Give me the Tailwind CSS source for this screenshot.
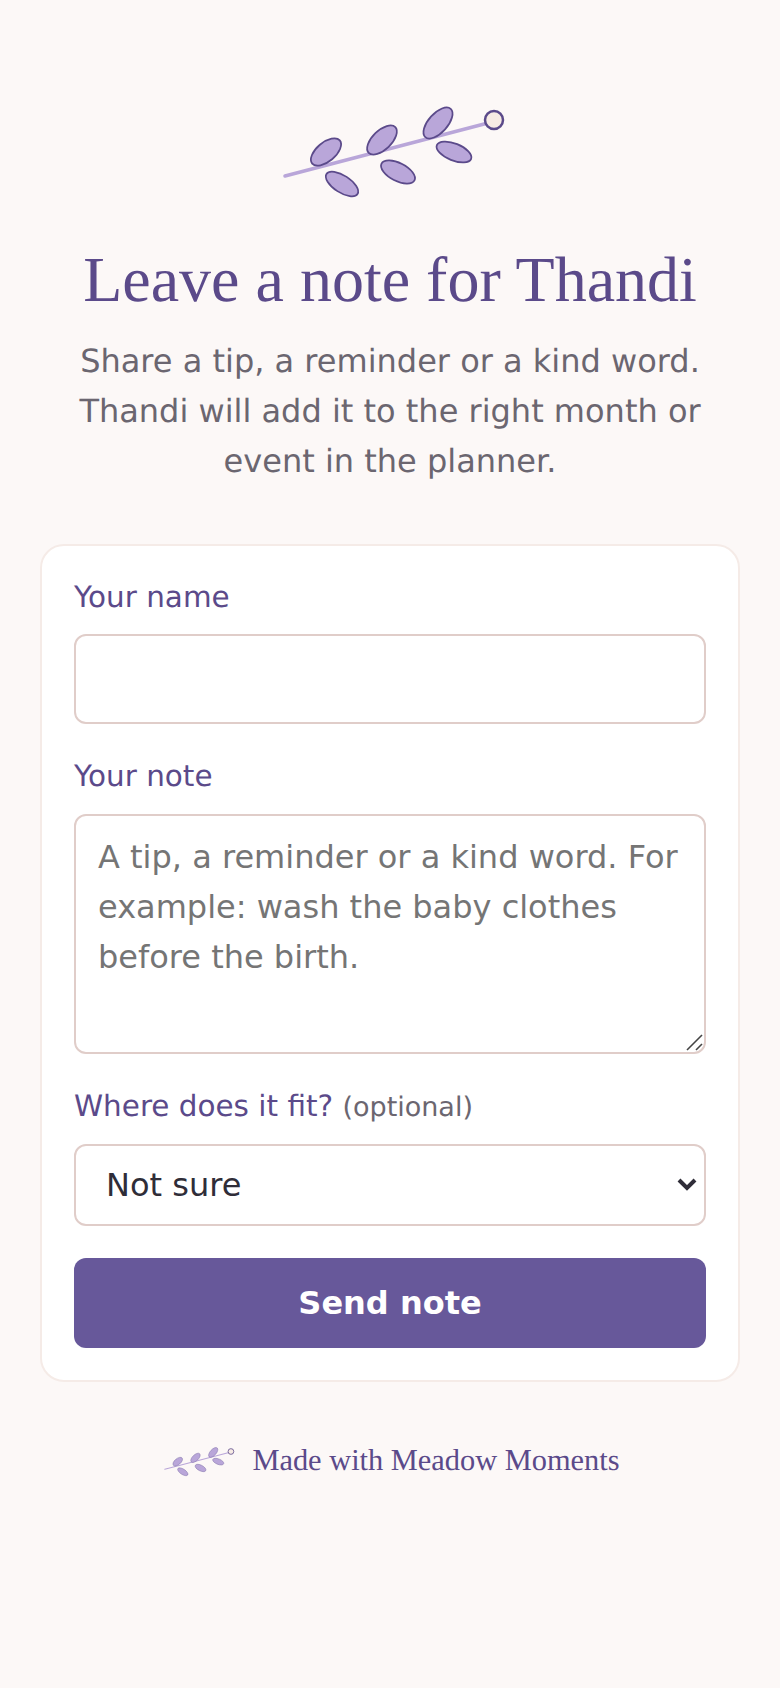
<!doctype html>
<html>

<head>
    <meta charset="UTF-8">
    <meta name="viewport" content="width=device-width, initial-scale=1.0">
    <script src="https://cdn.jsdelivr.net/npm/@tailwindcss/browser@4"></script>
</head>

<body class="bg-[#fcf8f7] font-['DejaVu_Sans',sans-serif] text-[#2f2d38] [text-rendering:geometricPrecision]">
    <main class="h-[1688px] px-[40px] pt-[100px]">
        <header class="flex flex-col items-center text-center">
            <svg class="w-[240px] h-[100px]" viewBox="0 0 240 100" fill="none">
                <line x1="15" y1="76" x2="218" y2="23" stroke="#b9a6d9" stroke-width="3.5" stroke-linecap="round" />
                <g fill="#b9a6d9" stroke="#5b4a8a" stroke-width="1.75">
                    <ellipse cx="56" cy="52" rx="18" ry="9.5" transform="rotate(-40 56 52)" />
                    <ellipse cx="112" cy="40" rx="18.5" ry="9.5" transform="rotate(-44 112 40)" />
                    <ellipse cx="168" cy="23" rx="19" ry="9.5" transform="rotate(-48 168 23)" />
                    <ellipse cx="72" cy="84" rx="18.5" ry="8.5" transform="rotate(33 72 84)" />
                    <ellipse cx="128" cy="72" rx="18.5" ry="9" transform="rotate(27 128 72)" />
                    <ellipse cx="184" cy="52" rx="18.5" ry="8.5" transform="rotate(22 184 52)" />
                </g>
                <circle cx="224" cy="20" r="9" fill="#f7ebe4" stroke="#5b4a8a" stroke-width="2.5" />
            </svg>
            <h1 class="mt-[41px] font-['Liberation_Serif',serif] text-[64px] leading-[77px] text-[#5b4a8a]">Leave a note for Thandi</h1>
            <p class="mt-[18px] max-w-[640px] text-[32px] leading-[50px] text-[#6b6670]">Share a tip, a reminder or a kind word. Thandi will add it to the right month or event in the planner.</p>
        </header>

        <form class="mt-[58px] flex flex-col rounded-[24px] border-2 border-[#f5ebe7] bg-white p-[32px]">
            <label class="text-[29.44px] leading-[38px] text-[#5b4a8a]" for="name">Your name</label>
            <input id="name" class="mt-[18px] h-[90px] rounded-[12px] border-2 border-[#e0cdc9] bg-white px-[22px] text-[32px]" type="text">

            <label class="mt-[33px] text-[29.44px] leading-[38px] text-[#5b4a8a]" for="note">Your note</label>
            <div class="relative mt-[19px] flex">
                <textarea id="note" class="h-[240px] w-full resize-none rounded-[12px] border-2 border-[#e0cdc9] bg-white px-[22px] py-[16px] text-[32px] leading-[50px] placeholder:text-[#757575]" placeholder="A tip, a reminder or a kind word. For example: wash the baby clothes before the birth."></textarea>
                <svg class="pointer-events-none absolute right-[2px] bottom-[2px] h-[18px] w-[18px]" viewBox="0 0 18 18" fill="none" stroke="#444444" stroke-width="1.6">
                    <line x1="1" y1="16" x2="16" y2="1" />
                    <line x1="10" y1="16" x2="16" y2="10" />
                </svg>
            </div>

            <label class="mt-[33px] text-[29.44px] leading-[38px] text-[#5b4a8a]" for="fit">Where does it fit? <span class="text-[27px] text-[#6b6670]">(optional)</span></label>
            <div class="relative mt-[17px] flex">
                <select id="fit" class="h-[82px] w-full appearance-none rounded-[12px] border-2 border-[#e0cdc9] bg-white px-[30px] text-[32px]">
                    <option>Not sure</option>
                </select>
                <svg class="pointer-events-none absolute right-[9px] top-[32px] h-[18px] w-[20px]" viewBox="0 0 20 18" fill="none" stroke="#2f2d38" stroke-width="4">
                    <polyline points="2,4 10,12 18,4" />
                </svg>
            </div>

            <button class="mt-[32px] h-[90px] rounded-[12px] bg-[#67589a] text-[32px] font-bold text-white" type="button">Send note</button>
        </form>

        <footer class="mt-[56px] flex items-center justify-center gap-[16px]">
            <svg class="w-[76px] h-[32px]" viewBox="0 0 240 100" fill="none">
                <line x1="15" y1="76" x2="218" y2="23" stroke="#b9a6d9" stroke-width="3.5" stroke-linecap="round" />
                <g fill="#b9a6d9" stroke="#7d6ea8" stroke-width="1.5">
                    <ellipse cx="56" cy="52" rx="18" ry="9.5" transform="rotate(-40 56 52)" />
                    <ellipse cx="112" cy="40" rx="18.5" ry="9.5" transform="rotate(-44 112 40)" />
                    <ellipse cx="168" cy="23" rx="19" ry="9.5" transform="rotate(-48 168 23)" />
                    <ellipse cx="72" cy="84" rx="18.5" ry="8.5" transform="rotate(33 72 84)" />
                    <ellipse cx="128" cy="72" rx="18.5" ry="9" transform="rotate(27 128 72)" />
                    <ellipse cx="184" cy="52" rx="18.5" ry="8.5" transform="rotate(22 184 52)" />
                </g>
                <circle cx="224" cy="20" r="9" fill="#f7ebe4" stroke="#5b4a8a" stroke-width="2.5" />
            </svg>
            <span class="font-['Liberation_Serif',serif] text-[30.4px] text-[#5b4a8a]">Made with Meadow Moments</span>
        </footer>
    </main>
</body>

</html>
